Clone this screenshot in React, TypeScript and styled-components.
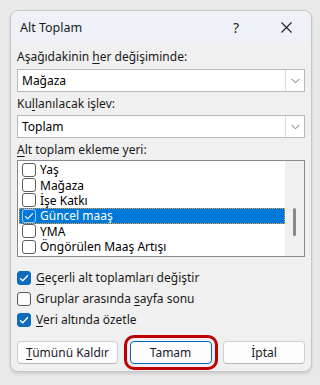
import React from "react";
import styled, { createGlobalStyle } from "styled-components";

const Global = createGlobalStyle`
  html, body { margin: 0; padding: 0; background: #e9e9e9; }
  body { font-family: "Segoe UI", "Noto Sans", "Open Sans", sans-serif; }
  #root { width: 320px; height: 385px; }
`;

const Page = styled.div`
  width: 320px;
  height: 385px;
  padding: 10px 8px 0 10px;
  box-sizing: border-box;
`;

const Dialog = styled.div`
  width: 302px;
  background: #f0f0f0;
  border: 1px solid #c6c6c6;
  border-radius: 8px;
  box-sizing: border-box;
  overflow: hidden;
  box-shadow: 0 2px 3px rgba(0, 0, 0, 0.12);
  color: #1a1a1a;
  font-size: 12px;
`;

const TitleBar = styled.div`
  height: 32px;
  background: #eef2f8;
  display: flex;
  align-items: center;
  padding-left: 9px;
`;

const Title = styled.div`
  flex: 1;
  font-size: 12.5px;
  color: #1a1a1a;
`;

const TitleButton = styled.div`
  width: 50px;
  height: 32px;
  display: flex;
  align-items: center;
  justify-content: center;
  font-size: 14px;
  color: #222;
`;

const Body = styled.div`
  padding: 6px 6px 7px 6px;
  display: flex;
  flex-direction: column;
`;

const Label = styled.div<{ $mt: number }>`
  height: 16px;
  line-height: 16px;
  margin-top: ${(p) => p.$mt}px;
  font-size: 12px;
  color: #1a1a1a;
`;

const U = styled.span`
  text-decoration: underline;
  text-underline-offset: 2px;
`;

const Combo = styled.div<{ $mt: number }>`
  margin-top: ${(p) => p.$mt}px;
  height: 23px;
  background: #fff;
  border: 1px solid #b9b9b9;
  box-sizing: border-box;
  display: flex;
  align-items: stretch;
`;

const ComboText = styled.div`
  flex: 1;
  padding-left: 4px;
  display: flex;
  align-items: center;
  font-size: 12px;
  color: #000;
`;

const ComboButton = styled.div`
  width: 18px;
  border-left: 1px solid #dadada;
  display: flex;
  align-items: center;
  justify-content: center;
`;

const ListBox = styled.div`
  margin-top: 2px;
  height: 97px;
  border: 1px solid #868a90;
  background: #fff;
  box-sizing: border-box;
  display: flex;
`;

const ListItems = styled.div`
  flex: 1;
  padding-top: 1px;
  padding-left: 1px;
  display: flex;
  flex-direction: column;
`;

const ListRow = styled.div<{ $sel?: boolean }>`
  height: 15.4px;
  display: flex;
  align-items: center;
  padding-left: 3px;
  gap: 4px;
  font-size: 12px;
  color: ${(p) => (p.$sel ? "#fff" : "#000")};
  background: ${(p) => (p.$sel ? "#0078d7" : "transparent")};
  outline: ${(p) => (p.$sel ? "1px dotted #f0a040" : "none")};
  outline-offset: -1px;
`;

const SmallBox = styled.div<{ $sel?: boolean }>`
  width: 12px;
  height: 12px;
  border: 1px solid ${(p) => (p.$sel ? "#9fc6ee" : "#5c5c5c")};
  border-radius: 3px;
  background: ${(p) => (p.$sel ? "#0078d7" : "#fff")};
  display: flex;
  align-items: center;
  justify-content: center;
  flex: none;
`;

const ScrollTrack = styled.div`
  width: 19px;
  background: #f0f0f0;
  display: flex;
  justify-content: center;
  padding-top: 47px;
  box-sizing: border-box;
`;

const Thumb = styled.div`
  width: 3px;
  height: 28px;
  border-radius: 2px;
  background: #8a8a8a;
`;

const Checks = styled.div`
  margin-top: 10px;
  display: flex;
  flex-direction: column;
`;

const CheckRow = styled.div`
  height: 21px;
  display: flex;
  align-items: center;
  gap: 5px;
  font-size: 12px;
  color: #1a1a1a;
`;

const Box = styled.div<{ $on?: boolean }>`
  width: 14px;
  height: 14px;
  box-sizing: border-box;
  border-radius: 3px;
  border: 1px solid ${(p) => (p.$on ? "#0f6cbd" : "#5a5a5a")};
  background: ${(p) => (p.$on ? "#0f6cbd" : "#fbfbfb")};
  display: flex;
  align-items: center;
  justify-content: center;
  flex: none;
`;

const Buttons = styled.div`
  margin-top: 11px;
  display: flex;
  justify-content: space-between;
`;

const Button = styled.div<{ $w: number; $def?: boolean }>`
  width: ${(p) => p.$w}px;
  height: 23px;
  box-sizing: border-box;
  background: #fdfdfd;
  border: 1px solid ${(p) => (p.$def ? "#0067c0" : "#d0d0d0")};
  border-bottom-color: ${(p) => (p.$def ? "#0067c0" : "#b8b8b8")};
  border-radius: 4px;
  display: flex;
  align-items: center;
  justify-content: center;
  font-size: 12px;
  color: #1b1b2a;
  outline: ${(p) => (p.$def ? "3px solid #c00000" : "none")};
  outline-offset: 3px;
`;

const Chevron = () => (
  <svg width="9" height="6" viewBox="0 0 9 6">
    <path d="M0.5 0.8 L4.5 4.8 L8.5 0.8" fill="none" stroke="#6e6e6e" strokeWidth="1" />
  </svg>
);

const Tick = ({ color }: { color: string }) => (
  <svg width="10" height="8" viewBox="0 0 10 8">
    <path d="M1 4.2 L3.7 6.8 L9 1.2" fill="none" stroke={color} strokeWidth="1.3" />
  </svg>
);

const CloseIcon = () => (
  <svg width="11" height="11" viewBox="0 0 11 11">
    <path d="M0.5 0.5 L10.5 10.5 M10.5 0.5 L0.5 10.5" stroke="#222" strokeWidth="1.1" />
  </svg>
);

const items = ["Yaş", "Mağaza", "İşe Katkı", "Güncel maaş", "YMA", "Öngörülen Maaş Artışı"];

export default function App() {
  return (
    <Page>
      <Global />
      <Dialog>
        <TitleBar>
          <Title>Alt Toplam</Title>
          <TitleButton>?</TitleButton>
          <TitleButton>
            <CloseIcon />
          </TitleButton>
        </TitleBar>
        <Body>
          <Label $mt={0}>
            Aşağıdakinin <U>h</U>er değişiminde:
          </Label>
          <Combo $mt={4}>
            <ComboText>Mağaza</ComboText>
            <ComboButton>
              <Chevron />
            </ComboButton>
          </Combo>
          <Label $mt={4}>
            Ku<U>l</U>lanılacak işlev:
          </Label>
          <Combo $mt={3}>
            <ComboText>Toplam</ComboText>
            <ComboButton>
              <Chevron />
            </ComboButton>
          </Combo>
          <Label $mt={4}>
            <U>A</U>lt toplam ekleme yeri:
          </Label>
          <ListBox>
            <ListItems>
              {items.map((it, i) => {
                const sel = i === 3;
                return (
                  <ListRow key={it} $sel={sel}>
                    <SmallBox $sel={sel}>{sel && <Tick color="#cfe3f7" />}</SmallBox>
                    {it}
                  </ListRow>
                );
              })}
            </ListItems>
            <ScrollTrack>
              <Thumb />
            </ScrollTrack>
          </ListBox>
          <Checks>
            <CheckRow>
              <Box $on>
                <Tick color="#fff" />
              </Box>
              <span>
                <U>G</U>eçerli alt toplamları değiştir
              </span>
            </CheckRow>
            <CheckRow>
              <Box />
              <span>
                Gruplar arasında <U>s</U>ayfa sonu
              </span>
            </CheckRow>
            <CheckRow>
              <Box $on>
                <Tick color="#fff" />
              </Box>
              <span>
                <U>V</U>eri altında özetle
              </span>
            </CheckRow>
          </Checks>
          <Buttons>
            <Button $w={101}>
              <span>
                <U>T</U>ümünü Kaldır
              </span>
            </Button>
            <Button $w={82} $def>
              Tamam
            </Button>
            <Button $w={82}>İptal</Button>
          </Buttons>
        </Body>
      </Dialog>
    </Page>
  );
}
